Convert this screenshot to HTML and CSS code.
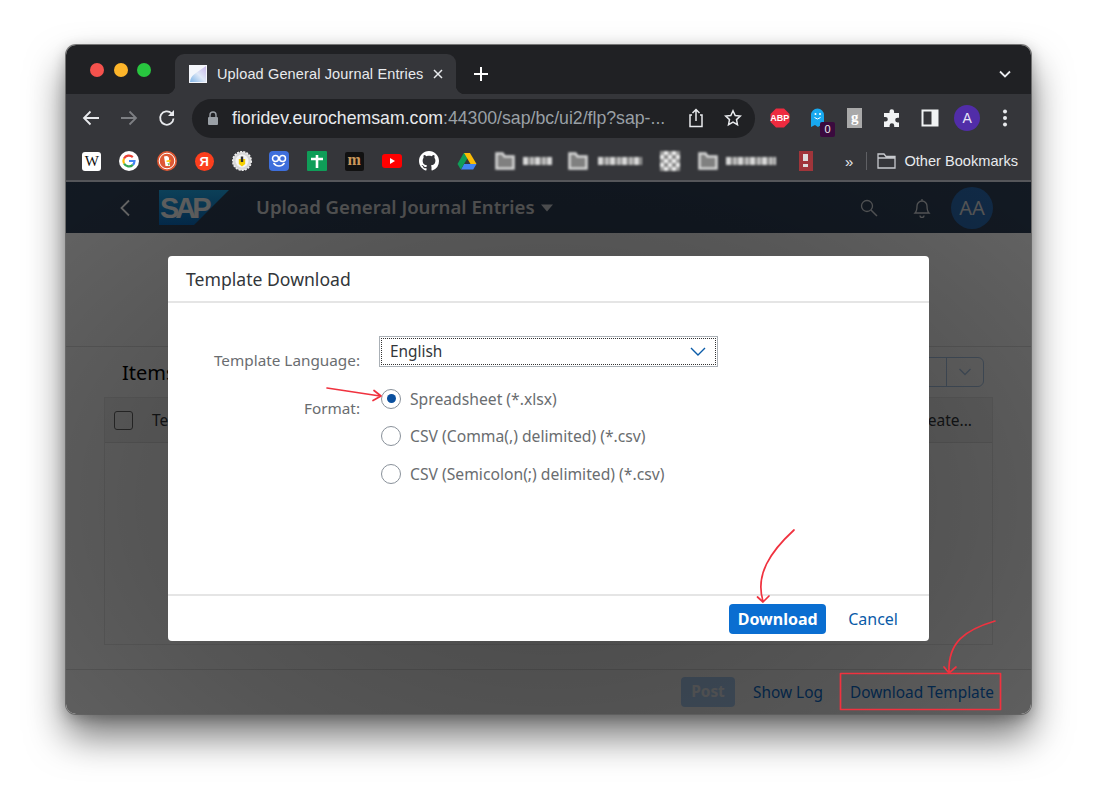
FILE: index.html
```html
<!DOCTYPE html>
<html lang="en">
<head>
  <meta charset="UTF-8" />
  <title>Upload General Journal Entries</title>
  <link rel="stylesheet" href="styles.css">
</head>
<body>

  <div class="window">
    <!-- tab strip -->
    <div class="tabstrip">
      <div class="lights"><i class="red"></i><i class="yellow"></i><i class="green"></i></div>
      <div class="tab">
        <svg class="favicon" width="18" height="18" viewBox="0 0 18 18"><defs><linearGradient id="fav" x1="0" y1="1" x2="1" y2="0"><stop offset="0" stop-color="#7fb4e6"/><stop offset=".5" stop-color="#dfe8f7"/><stop offset="1" stop-color="#c9b8ea"/></linearGradient></defs><rect width="18" height="18" fill="#f4f6fb"/><path d="M1 17C2 9 8 8 17 1V17Z" fill="url(#fav)"/></svg>
        <span class="tab-title">Upload General Journal Entries</span>
        <svg class="tab-close" width="12" height="12" viewBox="0 0 12 12"><path d="M2 2l8 8M10 2l-8 8" stroke="#e8eaed" stroke-width="1.5"/></svg>
      </div>
      <svg class="newtab" width="16" height="16" viewBox="0 0 16 16"><path d="M8 1v14M1 8h14" stroke="#fff" stroke-width="2"/></svg>
      <svg class="tabs-menu" width="14" height="14" viewBox="0 0 14 14"><path d="M2 4.500l5 5 5-5" fill="none" stroke="#e8eaed" stroke-width="1.8"/></svg>
    </div>

    <!-- address bar -->
    <div class="toolbar">
      <svg class="tool back" width="20" height="20" viewBox="0 0 20 20"><path d="M18 10H3M9.500 3.500L3 10l6.500 6.500" fill="none" stroke="#e8eaed" stroke-width="1.8"/></svg>
      <svg class="tool" width="20" height="20" viewBox="0 0 20 20"><path d="M2 10h15M10.500 3.500L17 10l-6.500 6.500" fill="none" stroke="#7d7f83" stroke-width="1.800"/></svg>
      <svg class="tool" width="20" height="20" viewBox="0 0 20 20"><path d="M16.500 10.500a6.700 6.700 0 1 1-1.900-5.100" fill="none" stroke="#e8eaed" stroke-width="1.800"/><path d="M17 2v6h-6z" fill="#e8eaed"/></svg>
      <div class="omnibox">
        <svg width="12" height="14" viewBox="0 0 12 14"><path d="M3 6V4a3 3 0 0 1 6 0v2" fill="none" stroke="#9aa0a6" stroke-width="1.400"/><rect x="1" y="6" width="10" height="8" rx="1" fill="#9aa0a6"/></svg>
        <span class="url"><b>fioridev.eurochemsam.com</b>:44300/sap/bc/ui2/flp?sap-...</span>
        <svg class="share" width="18" height="20" viewBox="0 0 18 20"><path d="M5 7H3v11.500h12V7h-2M9 13V1.500M5.500 5L9 1.500 12.500 5" fill="none" stroke="#e8eaed" stroke-width="1.500"/></svg>
        <svg class="star" width="18" height="18" viewBox="0 0 18 18"><path d="M9 1.800l2.200 4.700 5.100.6-3.800 3.500 1 5.100L9 13.200l-4.500 2.500 1-5.100-3.800-3.500 5.100-.6z" fill="none" stroke="#e8eaed" stroke-width="1.500"/></svg>
      </div>
      <div class="extensions">
        <span class="ext"><svg width="20" height="20" viewBox="0 0 20 20"><path d="M6 0.500h8L19.500 6v8L14 19.500H6L0.500 14V6z" fill="#ee2b3f"/></svg><em class="abp">ABP</em></span>
        <span class="ext"><svg width="18" height="22" viewBox="-1 0 18 22"><path d="M2 20V8a6.500 6.500 0 0 1 13 0v12l-3-2-3 2-3-2z" fill="#18a8ef"/><circle cx="6.500" cy="7" r="1" fill="#fff"/><circle cx="11" cy="7" r="1" fill="#fff"/><path d="M5.500 10.500q3 3 6 0" fill="none" stroke="#fff"/></svg><em class="badge">0</em></span>
        <span class="ext"><span class="gplus">g</span></span>
        <span class="ext"><svg width="20" height="20" viewBox="0 0 20 20"><path d="M7.500 3.500a2.300 2.300 0 0 1 4.600 0V5H17v4.800h-1.500a2.300 2.300 0 0 0 0 4.600H17V19H12.200v-1.500a2.300 2.300 0 0 0-4.600 0V19H2v-5.500h1.500a2.300 2.300 0 0 0 0-4.600H2V5h5.500z" fill="#f1f3f4"/></svg></span>
        <span class="ext"><svg width="18" height="18" viewBox="0 0 18 18"><path d="M1.500 1.500h15v15h-15z" fill="#35363a" stroke="#f1f3f4" stroke-width="2"/><rect x="10.500" y="1" width="6.500" height="16" fill="#f1f3f4"/></svg></span>
        <span class="ext"><span class="profile">A</span></span>
        <span class="ext"><svg width="6" height="18" viewBox="0 0 6 18"><circle cx="3" cy="2.500" r="2" fill="#e8eaed"/><circle cx="3" cy="9" r="2" fill="#e8eaed"/><circle cx="3" cy="15.500" r="2" fill="#e8eaed"/></svg></span>
      </div>
    </div>

    <!-- bookmarks -->
    <div class="bookmarks">
      <span class="bm"><span class="wiki">W</span></span>
      <span class="bm"><svg width="20" height="20" viewBox="0 0 20 20"><circle cx="10" cy="10" r="10" fill="#fff"/><path d="M10 10h5.500a5.500 5.500 0 0 1-1.700 3.900" fill="none" stroke="#4285f4" stroke-width="2.200"/><path d="M13.800 13.900A5.600 5.600 0 0 1 5 12.500" fill="none" stroke="#34a853" stroke-width="2.200"/><path d="M5 12.500a5.600 5.600 0 0 1 0-5" fill="none" stroke="#fbbc05" stroke-width="2.200"/><path d="M5 7.500a5.600 5.600 0 0 1 8.800-1.400" fill="none" stroke="#ea4335" stroke-width="2.200"/></svg></span>
      <span class="bm"><svg width="20" height="20" viewBox="0 0 20 20"><circle cx="10" cy="10" r="10" fill="#de5833"/><circle cx="10" cy="10" r="7.800" fill="none" stroke="#fff" stroke-width="1"/><path d="M7 5.500c3-1.500 5.500 0 5 3l1 6.500H8.500z" fill="#fff"/><path d="M9.500 9.500l4-.8v2l-4 .2z" fill="#fdd20a"/><path d="M10.500 12l2.500 .8-1.500 2z" fill="#65bc46"/></svg></span>
      <span class="bm"><span class="yandex">Я</span></span>
      <span class="bm"><svg width="20" height="20" viewBox="0 0 20 20"><circle cx="10" cy="10" r="9.300" fill="#d8d8d8" stroke="#eee" stroke-width="1.500" stroke-dasharray="2 1.200"/><circle cx="10" cy="10" r="6.500" fill="#f4f4f4"/><path d="M6.800 8h6.400v5L10 15.500 6.800 13z" fill="#f6d100"/><rect x="8.800" y="5.500" width="2.400" height="5.500" fill="#333"/></svg></span>
      <span class="bm"><svg width="20" height="20" viewBox="0 0 20 20"><rect width="20" height="20" rx="4" fill="#3e6fdc"/><circle cx="6.500" cy="7.500" r="3" fill="none" stroke="#fff" stroke-width="1.500"/><circle cx="13.500" cy="7.500" r="3" fill="none" stroke="#fff" stroke-width="1.500"/><path d="M4.500 12c3 4 8 4 11 0" fill="none" stroke="#fff" stroke-width="1.500"/></svg></span>
      <span class="bm"><svg width="20" height="20" viewBox="0 0 20 20"><rect width="20" height="20" rx="1" fill="#0f9d58"/><path d="M10 4v13M4 8h12" stroke="#fff" stroke-width="2.600"/></svg></span>
      <span class="bm"><span class="medium">m</span></span>
      <span class="bm"><svg width="20" height="14" viewBox="0 0 20 14"><rect width="20" height="14" rx="3" fill="#f00"/><path d="M8 4l5 3-5 3z" fill="#fff"/></svg></span>
      <span class="bm"><svg width="20" height="20" viewBox="0 0 16 16"><path fill="#fff" d="M8 0C3.580 0 0 3.580 0 8c0 3.540 2.290 6.530 5.470 7.590.4.070.55-.17.55-.38 0-.19-.01-.82-.01-1.490-2.010.37-2.530-.49-2.690-.94-.09-.23-.48-.94-.82-1.130-.28-.15-.68-.52-.01-.53.630-.01 1.080.58 1.230.82.720 1.210 1.870.87 2.330.66.070-.52.280-.87.510-1.070-1.780-.2-3.640-.89-3.640-3.950 0-.87.310-1.590.820-2.150-.08-.2-.36-1.020.08-2.120 0 0 .67-.21 2.200.82.640-.18 1.320-.27 2-.27s1.360.09 2 .27c1.530-1.040 2.200-.82 2.200-.82.440 1.100.16 1.920.08 2.120.51.560.82 1.270.82 2.150 0 3.070-1.870 3.750-3.650 3.950.29.250.54.730.54 1.480 0 1.070-.01 1.930-.01 2.200 0 .21.150.46.550.38A8.010 8.010 0 0 0 16 8c0-4.420-3.580-8-8-8z"/></svg></span>
      <span class="bm"><svg width="20" height="18" viewBox="0 0 20 18"><path d="M7 1h6l-3.300 6-3.300-.2z" fill="#0f9d58"/><path d="M13 1l6.500 11h-6L7 1z" fill="#fbbc05"/><path d="M19.500 12l-3.300 5.500H4L7 12z" fill="#4285f4"/><path d="M6.800 1L.500 12l3.300 5.500L10 7z" fill="#0f9d58"/></svg></span>

      <svg class="folder first" width="20" height="18" viewBox="0 0 20 18"><path d="M1.500 16.500V1.500h6l2 3h9v12z" fill="#808080" stroke="#d8d8d8" stroke-width="2.500"/></svg>
      <span class="smudge s1"></span>
      <svg class="folder" width="20" height="18" viewBox="0 0 20 18"><path d="M1.500 16.500V1.500h6l2 3h9v12z" fill="#808080" stroke="#d8d8d8" stroke-width="2.500"/></svg>
      <span class="smudge s2"></span>
      <span class="checker"></span>
      <svg class="folder" width="20" height="18" viewBox="0 0 20 18"><path d="M1.500 16.500V1.500h6l2 3h9v12z" fill="#808080" stroke="#d8d8d8" stroke-width="2.500"/></svg>
      <span class="smudge s3"></span>
      <span class="redmark"></span>

      <div class="bm-right">
        <span class="more">»</span>
        <span class="bm-sep"></span>
        <svg width="19" height="16" viewBox="0 0 19 16"><path d="M1 15V1h6l2 2.500h9V15zM1 5h17" fill="none" stroke="#c8cace" stroke-width="1.300"/></svg>
        <span class="other">Other Bookmarks</span>
      </div>
    </div>

    <!-- fiori app, dimmed behind the dialog -->
    <div class="app">
      <header class="shell">
        <svg class="shell-back" width="12" height="18" viewBox="0 0 12 18"><path d="M10 1.500L2.500 9l7.500 7.500" fill="none" stroke="#fff" stroke-width="1.800"/></svg>
        <svg class="sap" width="70" height="35" viewBox="0 0 70 35"><defs><linearGradient id="sapblue" x1="0" y1="0" x2="0" y2="1"><stop offset="0" stop-color="#1fa8e8"/><stop offset="1" stop-color="#0a6cc0"/></linearGradient></defs><path d="M0 0h70L35 35H0z" fill="url(#sapblue)"/><text x="1" y="28" class="sap-text">SAP</text></svg>
        <span class="shell-title">Upload General Journal Entries</span>
        <svg class="shell-caret" width="12" height="8" viewBox="0 0 12 8"><path d="M0 .5h12L6 7.500z" fill="#fff"/></svg>
        <div class="shell-right">
          <svg width="18" height="18" viewBox="0 0 18 18"><circle cx="7" cy="7" r="5.500" fill="none" stroke="#fff" stroke-width="1.300"/><path d="M11 11l6 6" stroke="#fff" stroke-width="1.500"/></svg>
          <svg width="18" height="20" viewBox="0 0 18 20"><path d="M2 15c2-2 2-4 2-7a5 5 0 0 1 10 0c0 3 0 5 2 7zM9 1v2M7 17.500a2 2 0 0 0 4 0" fill="none" stroke="#fff" stroke-width="1.300"/></svg>
          <span class="avatar">AA</span>
        </div>
      </header>

      <main class="page">
        <div class="page-head"></div>
        <div class="items-bar">
          <span class="items-title">Items</span>
          <div class="split"><span></span><span><svg width="14" height="8" viewBox="0 0 14 8"><path d="M1.500 1l5.500 5.500L12.500 1" fill="none" stroke="#a8c4e4" stroke-width="1.300"/></svg></span></div>
        </div>
        <div class="table">
          <div class="thead">
            <span class="check"></span>
            <span class="col-first">Template</span>
            <span class="col-last">Create...</span>
          </div>
        </div>
      </main>

      <footer class="page-foot">
        <span class="btn-post">Post</span>
        <span class="btn-link">Show Log</span>
        <span class="btn-link">Download Template</span>
      </footer>

      <div class="scrim"></div>

      <div class="dialog">
        <div class="dialog-head">Template Download</div>
        <div class="dialog-body">
          <label class="form-label lang">Template Language:</label>
          <div class="select">
            <span>English</span>
            <svg width="16" height="10" viewBox="0 0 16 10"><path d="M1 1l7 7 7-7" fill="none" stroke="#0a5ba8" stroke-width="1.400"/></svg>
          </div>
          <label class="form-label format">Format:</label>
          <div class="radios">
            <div class="radio on"><i></i>Spreadsheet (*.xlsx)</div>
            <div class="radio"><i></i>CSV (Comma(,) delimited) (*.csv)</div>
            <div class="radio"><i></i>CSV (Semicolon(;) delimited) (*.csv)</div>
          </div>
        </div>
        <div class="dialog-foot">
          <button class="primary">Download</button>
          <button class="ghost">Cancel</button>
        </div>
      </div>
    </div>
  </div>

  <!-- hand drawn annotations -->
  <svg class="marks" width="1100" height="806" viewBox="0 0 1100 806">
    <g fill="none" stroke="#f0323f" stroke-width="1.700" stroke-linecap="round" stroke-linejoin="round">
      <path d="M327 388L380 396M374 390.500L381 396L373 400.500"/>
      <path d="M794 530C770 552 755 575 763 601M757.500 597L763 602L769 596"/>
      <path d="M995 621C965 630 948 642 949 672M944 667L949 673L956 667"/>
      <rect x="840.500" y="673.500" width="160" height="36"/>
    </g>
  </svg>

</body>
</html>
```

FILE: styles.css
```css
* {
  box-sizing: border-box;
}

body {
  margin: 0;
  width: 1100px;
  height: 806px;
  overflow: hidden;
  background: white;
  padding: 45px 0 0 66px;
  font-family: 'Liberation Sans', sans-serif;
}

.window {
  position: relative;
  width: 965px;
  height: 669px;
  border-radius: 10px;
  overflow: hidden;
  display: flex;
  flex-direction: column;
  box-shadow: 0 0 0 1px rgba(90,90,90,0.8), 0 22px 38px rgba(0,0,0,0.55), 0 4px 14px rgba(0,0,0,0.25);
}

/* tab strip */
.tabstrip {
  height: 49px;
  flex: none;
  background: #202124;
  display: flex;
  align-items: flex-end;
  position: relative;
}

.lights {
  display: flex;
  gap: 9.500px;
  align-self: flex-start;
  margin: 18px 0 0 24px;
}

.lights i {
  width: 14px;
  height: 14px;
  border-radius: 50%;
}

.red { background: #f4524d; }
.yellow { background: #fdb52a; }
.green { background: #28c63f; }

.tab {
  position: relative;
  width: 281px;
  height: 40px;
  margin-left: 24px;
  background: #35363a;
  border-radius: 9px 9px 0 0;
  display: flex;
  align-items: center;
  padding: 0 0 0 14px;
  color: #e8eaed;
  font-size: 14.500px;
}

.tab::before,
.tab::after {
  content: "";
  position: absolute;
  bottom: 0;
  width: 9px;
  height: 9px;
}

.tab::before {
  left: -9px;
  background: radial-gradient(circle at 0 0, transparent 9px, #35363a 9.500px);
}

.tab::after {
  right: -9px;
  background: radial-gradient(circle at 100% 0, transparent 9px, #35363a 9.500px);
}

.tab-title {
  margin-left: 10px;
  white-space: nowrap;
  letter-spacing: 0.14px;
}

.tab-close {
  margin-left: 8px;
}

.newtab {
  margin: 0 0 12px 17px;
}

.tabs-menu {
  position: absolute;
  right: 19px;
  top: 22px;
}

/* toolbar */
.toolbar {
  height: 48px;
  flex: none;
  background: #35363a;
  display: flex;
  align-items: center;
  padding-left: 15px;
  position: relative;
}

.tool {
  margin-right: 18px;
}

.omnibox {
  width: 563px;
  height: 39px;
  margin-left: -3px;
  border-radius: 20px;
  background: #202124;
  display: flex;
  align-items: center;
  padding-left: 15px;
  color: #9aa0a6;
  font-size: 17.700px;
}

.url {
  margin-left: 13px;
  white-space: nowrap;
  flex: 1;
}

.url b {
  font-weight: normal;
  color: #e8eaed;
}

.share {
  margin-right: 19px;
}

.star {
  margin-right: 13px;
}

.extensions {
  display: flex;
  align-items: center;
  margin-left: 6px;
}

.ext {
  position: relative;
  width: 37.500px;
  display: flex;
  justify-content: center;
  align-items: center;
}

.abp {
  position: absolute;
  font: bold 9px 'Liberation Sans', sans-serif;
  color: white;
}

.badge {
  position: absolute;
  right: 1px;
  bottom: -8px;
  width: 15px;
  height: 15px;
  background: #3a0a3e;
  border-radius: 2px;
  color: #eee;
  font: 11px/15px 'Liberation Sans', sans-serif;
  text-align: center;
}

.gplus {
  width: 15px;
  height: 20px;
  background: #a9a9a9;
  color: white;
  font: bold 15px/18px 'Liberation Serif', serif;
  text-align: center;
}

.profile {
  width: 26px;
  height: 26px;
  border-radius: 50%;
  background: #512da8;
  color: #e8e4f6;
  font-size: 14px;
  line-height: 26px;
  text-align: center;
}

/* bookmarks */
.bookmarks {
  height: 40px;
  flex: none;
  background: #35363a;
  border-bottom: 2px solid #55565a;
  display: flex;
  align-items: center;
  padding-left: 7px;
  color: #e8eaed;
}

.bm {
  width: 37.500px;
  flex: none;
  display: flex;
  justify-content: center;
}

.wiki {
  width: 19px;
  height: 19px;
  background: white;
  border-radius: 3px;
  color: #111;
  font: 15px/19px 'Liberation Serif', serif;
  text-align: center;
}

.yandex {
  width: 19px;
  height: 19px;
  border-radius: 50%;
  background: #fc3f1d;
  color: white;
  font: bold 13px/19px 'Liberation Sans', sans-serif;
  text-align: center;
}

.medium {
  width: 19px;
  height: 19px;
  background: #111;
  border-radius: 2px;
  color: #c9985b;
  font: bold 16px/16px 'Liberation Serif', serif;
  text-align: center;
}

.folder {
  flex: none;
  filter: blur(0.8px);
}

.folder.first {
  margin-left: 9px;
}

.smudge {
  height: 8px;
  flex: none;
  filter: blur(1.2px);
  background: repeating-linear-gradient(to right, #d8d8d8 0 5px, #777 5px 7px, #bbb 7px 11px, #666 11px 12px);
}

.s1 { width: 29px; margin: 0 16px 0 8px; }
.s2 { width: 44px; margin: 0 18px 0 10px; }
.s3 { width: 50px; margin: 0 23px 0 8px; }

.checker {
  width: 20px;
  height: 20px;
  flex: none;
  margin-right: 18px;
  filter: blur(1px);
  background: conic-gradient(#eee 25%, #888 0 50%, #eee 0 75%, #999 0) 0 0 / 8px 8px;
}

.redmark {
  width: 14px;
  height: 20px;
  flex: none;
  filter: blur(0.6px);
  background: linear-gradient(#ddd, #ddd) center 3px / 5px 7px no-repeat, linear-gradient(#ddd, #ddd) center 13px / 5px 3px no-repeat, #a0353a;
}

.bm-right {
  margin-left: auto;
  display: flex;
  align-items: center;
  padding-right: 13px;
}

.more {
  font-size: 15px;
}

.bm-sep {
  width: 1px;
  height: 18px;
  background: #5f6064;
  margin: 0 10px 0 13px;
}

.other {
  margin-left: 8px;
  font-size: 14.600px;
  white-space: nowrap;
}

/* dimmed app */
.app {
  position: relative;
  flex: 1;
  display: flex;
  flex-direction: column;
  background: #fafafa;
  font-family: 'Noto Sans', sans-serif;
}

.shell {
  height: 51px;
  flex: none;
  background: #2e3f56;
  display: flex;
  align-items: center;
  padding-left: 53px;
  color: white;
}

.sap {
  margin-left: 28px;
}

.sap-text {
  font: bold 29px 'Liberation Sans', sans-serif;
  letter-spacing: -4px;
  fill: #f4f4f4;
}

.shell-title {
  margin: 0 6px 2px 27px;
  font-size: 18.600px;
  font-weight: 600;
  color: #dcdcdc;
}

.shell-caret {
  opacity: 0.8;
}

.shell-right {
  margin-left: auto;
  display: flex;
  align-items: center;
  gap: 35px;
  padding-right: 38px;
}

.shell-right svg {
  opacity: 0.8;
}

.avatar {
  width: 42px;
  height: 42px;
  margin-left: -15px;
  border-radius: 50%;
  background: #2a6ab0;
  color: #d8d8d8;
  font-size: 20px;
  line-height: 42px;
  text-align: center;
}

.page {
  flex: 1;
}

.page-head {
  height: 114px;
  border-bottom: 1px solid #dcdcdc;
}

.items-bar {
  display: flex;
  align-items: center;
  justify-content: space-between;
  height: 50px;
  padding: 0 47px 0 56px;
}

.items-title {
  font-size: 20px;
}

.split {
  display: flex;
  height: 30px;
  width: 76px;
  border: 1px solid #a8c4e4;
  border-radius: 6px;
}

.split span {
  flex: 1;
  display: flex;
  align-items: center;
  justify-content: center;
}

.split span + span {
  flex: none;
  width: 37px;
  border-left: 1px solid #a8c4e4;
}

.table {
  margin: 0 38px;
  height: 248px;
  border: 1px solid #e4e4e4;
}

.thead {
  height: 45px;
  background: #f0f0f0;
  display: flex;
  align-items: center;
  padding: 0 20px 0 9px;
  font-size: 15.500px;
  color: #32363a;
  border-bottom: 1px solid #dcdcdc;
}

.check {
  width: 19px;
  height: 19px;
  border: 1px solid #666;
  border-radius: 3px;
  margin-right: 19px;
}

.col-last {
  margin-left: auto;
}

.page-foot {
  height: 45px;
  flex: none;
  display: flex;
  align-items: center;
  justify-content: flex-end;
  padding: 0 37px 0 0;
  gap: 27px;
  border-top: 1px solid #dcdcdc;
  font-size: 15.400px;
  color: #0a6ed1;
}

.btn-post {
  width: 54px;
  height: 30px;
  margin-right: -9px;
  background: #aed0f5;
  color: #eef0f4;
  border-radius: 4px;
  font-weight: bold;
  line-height: 30px;
  text-align: center;
}

/* dialog */
.scrim {
  position: absolute;
  inset: 0;
  background: radial-gradient(ellipse at 50% 60%, rgba(0,0,0,0.72), rgba(0,0,0,0.66) 60%, rgba(0,0,0,0.6));
}

.dialog {
  position: absolute;
  left: 102px;
  top: 74px;
  width: 761px;
  height: 385px;
  background: white;
  border-radius: 4px;
  display: flex;
  flex-direction: column;
  color: #32363a;
}

.dialog-head {
  height: 47px;
  flex: none;
  padding-left: 18px;
  border-bottom: 2px solid #e5e5e5;
  font-size: 17.600px;
  line-height: 46px;
}

.dialog-body {
  flex: 1;
  display: grid;
  grid-template-columns: 192px 337px;
  column-gap: 20px;
  align-content: start;
  padding-top: 34px;
}

.form-label {
  text-align: right;
  font-size: 15.300px;
  color: #6a6d70;
}

.lang {
  padding-top: 13px;
}

.format {
  padding-top: 28px;
}

.select {
  height: 29px;
  padding: 0 10px;
  display: flex;
  align-items: center;
  justify-content: space-between;
  background: #fff;
  box-shadow: 0 0 0 1px #aab0b6;
  outline: 1px dotted #333;
  outline-offset: -2px;
  font-size: 15.400px;
}

.select svg {
  margin-right: 1px;
}

.radios {
  margin-top: 10px;
  margin-left: 1px;
}

.radio {
  display: flex;
  align-items: center;
  height: 37.500px;
  gap: 9px;
  font-size: 15.700px;
  color: #6a6d70;
}

.radio i {
  width: 20px;
  height: 20px;
  border: 1px solid #89919a;
  border-radius: 50%;
  background: white;
  display: flex;
  align-items: center;
  justify-content: center;
}

.radio.on i::after {
  content: "";
  width: 9px;
  height: 9px;
  border-radius: 50%;
  background: #0a4f9e;
}

.dialog-foot {
  height: 47px;
  flex: none;
  border-top: 2px solid #e5e5e5;
  display: flex;
  align-items: center;
  justify-content: flex-end;
  padding: 1px 31px 0 0;
  gap: 22px;
}

button {
  font-family: 'Noto Sans', sans-serif;
  font-size: 16px;
  border: none;
  background: none;
  padding: 0;
  cursor: pointer;
}

.primary {
  width: 97px;
  height: 30px;
  border-radius: 4px;
  background: #0a6ed1;
  color: white;
  font-weight: bold;
}

.ghost {
  color: #0a5ba8;
}

.marks {
  position: absolute;
  left: 0;
  top: 0;
  pointer-events: none;
}
```
